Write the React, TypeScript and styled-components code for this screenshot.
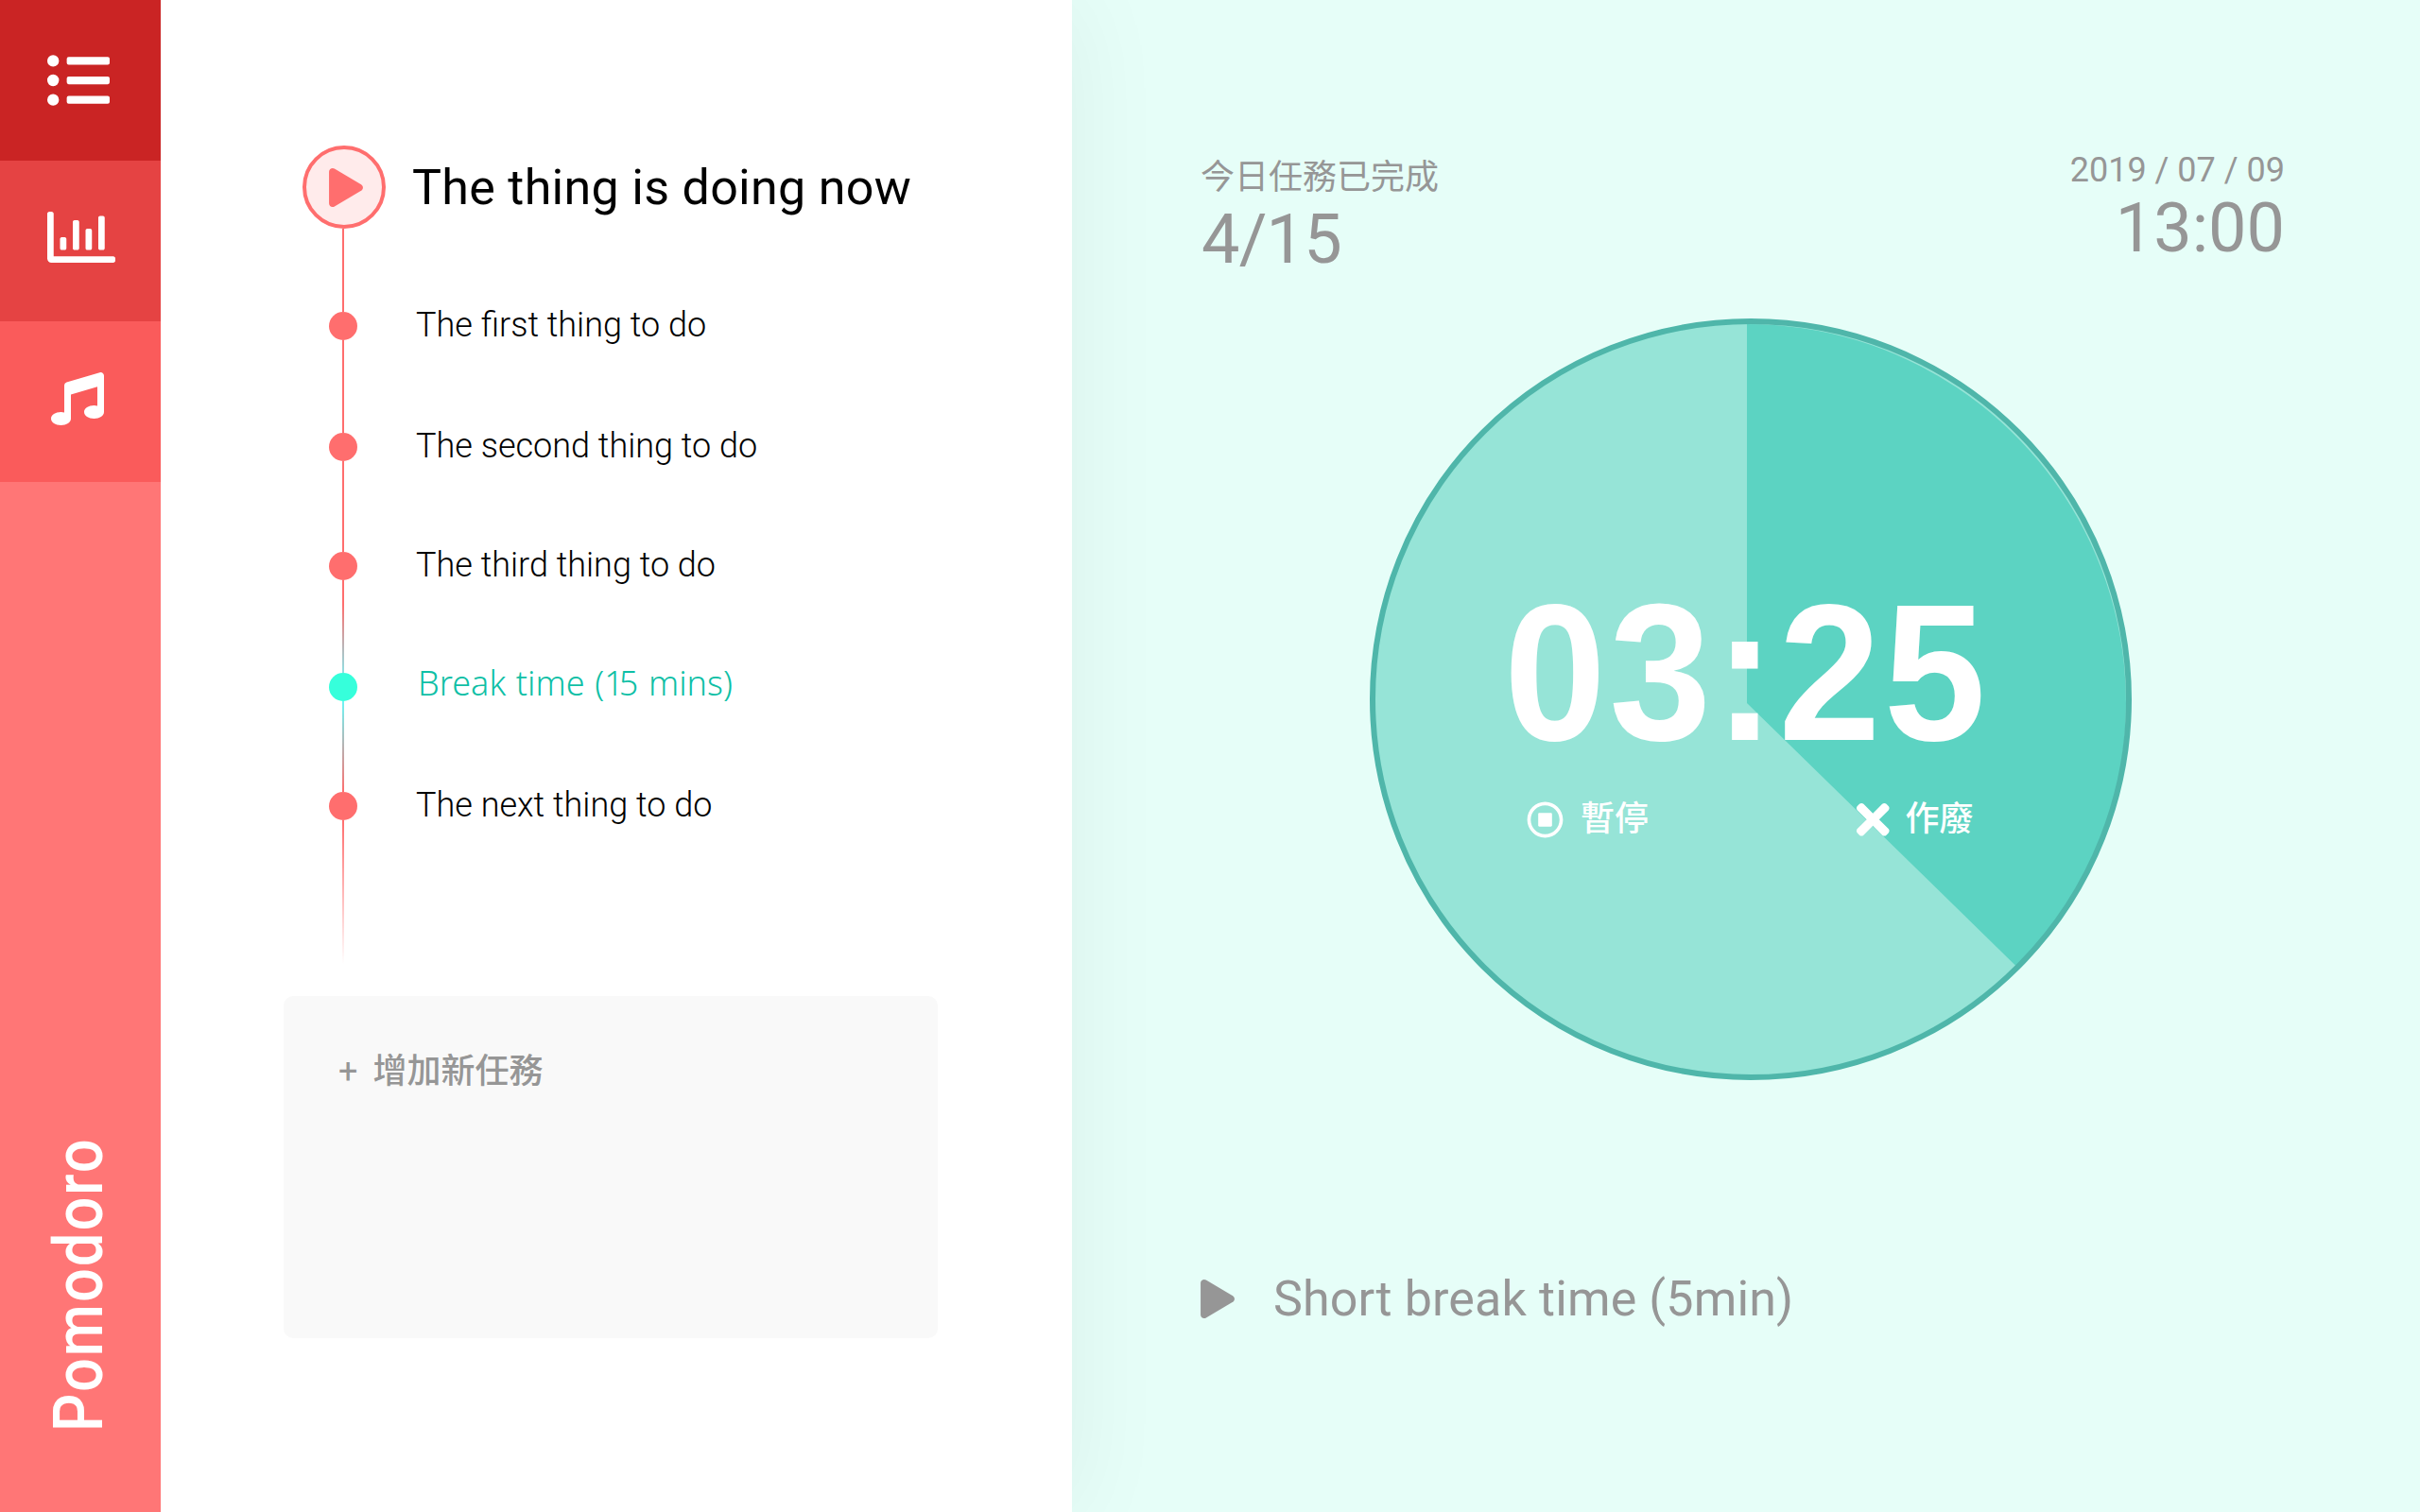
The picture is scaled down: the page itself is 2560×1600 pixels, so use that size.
import React, { type ReactNode } from "react";
import styled, { createGlobalStyle } from "styled-components";
import { FaListUl, FaRegChartBar, FaMusic, FaPlay, FaRegStopCircle, FaTimes } from "react-icons/fa";

const GlobalStyle = createGlobalStyle`
  *, *::before, *::after { box-sizing: border-box; }
  body { margin: 0; background: #e6fef8; }
  svg { display: block; flex: none; }
`;

const Page = styled.div`
  display: flex;
  width: 2560px;
  height: 1600px;
  overflow: hidden;
  font-family: Roboto, "Noto Sans CJK TC", sans-serif;
  color: #000;
`;

/* ---------- sidebar ---------- */

const Sidebar = styled.nav`
  display: flex;
  flex-direction: column;
  flex: none;
  width: 170px;
  background: #ff7676;
  color: #fff;
  position: relative;
  z-index: 2;
`;

const NavItem = styled.a<{ $bg: string; $top: number; $left: number }>`
  display: block;
  flex: none;
  height: 170px;
  padding: ${(p) => p.$top}px 0 0 ${(p) => p.$left}px;
  background: ${(p) => p.$bg};
`;

const Brand = styled.div`
  margin-top: auto;
  margin-bottom: 64px;
  width: 167px;
  font-size: 72px;
  font-weight: 500;
  line-height: 167px;
  letter-spacing: 2.2px;
  white-space: nowrap;
  writing-mode: vertical-rl;
  transform: rotate(180deg) scaleY(0.88);
`;

/* ---------- task panel ---------- */

const TaskPanel = styled.section`
  position: relative;
  z-index: 1;
  flex: none;
  width: 964px;
  padding: 154px 0 0 130px;
  background: #fff;
  box-shadow: 0 0 100px rgba(0, 0, 0, 0.06);
`;

const Timeline = styled.div`
  display: flex;
  flex-direction: column;
  padding-left: 20px;
`;

const CurrentTask = styled.div`
  display: flex;
  align-items: center;
  gap: 28px;
  height: 88px;
`;

const Headline = styled.span<{ $spacing: number }>`
  padding-top: 1px;
  font-size: 52px;
  line-height: 60px;
  letter-spacing: ${(p) => p.$spacing}px;
  white-space: nowrap;
`;

const PlayBadge = styled.span`
  display: flex;
  align-items: center;
  justify-content: center;
  width: 88px;
  height: 88px;
  padding-left: 4px;
  border: 4px solid #ff6e6e;
  border-radius: 50%;
  background: #ffebeb;
  color: #ff6e6e;
`;

const PlayIcon = styled(FaPlay)`
  width: 36px;
  height: 41px;
`;

const TaskRow = styled.div`
  display: flex;
  align-items: flex-end;
  gap: 34px;
`;

const Rail = styled.div`
  display: flex;
  flex: none;
  flex-direction: column;
  align-items: center;
  width: 86px;
`;

const Connector = styled.span<{ $length: number; $from?: string; $to?: string }>`
  width: 2px;
  height: ${(p) => p.$length}px;
  background: linear-gradient(${(p) => p.$from ?? "#ff6e6e"}, ${(p) => p.$to ?? "#ff6e6e"});
`;

const Dot = styled.span<{ $rest?: boolean }>`
  width: 30px;
  height: 30px;
  border-radius: 50%;
  background: ${(p) => (p.$rest ? "#36ffdb" : "#ff6e6e")};
`;

const TaskLabel = styled.span`
  padding-bottom: 1px;
  font-size: 36px;
  font-weight: 300;
  line-height: 30px;
  white-space: nowrap;
`;

const BreakLabel = styled(TaskLabel)`
  padding: 0 0 4px 2px;
  font-family: "Noto Sans", sans-serif;
  word-spacing: 1.3px;
  color: #0fbfa6;
`;

const Kern = styled.span`
  letter-spacing: -5px;
`;

const NewTask = styled.div`
  display: flex;
  align-items: flex-start;
  gap: 16px;
  width: 692px;
  height: 362px;
  margin-top: 34px;
  padding: 54px 58px;
  border-radius: 10px;
  background: #f9f9f9;
  color: #969696;
  font-size: 36px;
  font-weight: 500;
  line-height: 52px;
`;

const Plus = styled.span`
  font-weight: 400;
`;

/* ---------- timer pane ---------- */

const TimerPane = styled.main`
  flex: 1;
  padding: 159px 143px 0 137px;
  background: #e6fef8;
  color: #969696;
`;

const Summary = styled.header`
  display: flex;
  justify-content: space-between;
  height: 178px;
`;

const Stat = styled.div<{ $gap: number; $right?: boolean }>`
  display: flex;
  flex-direction: column;
  align-items: ${(p) => (p.$right ? "flex-end" : "flex-start")};
  gap: ${(p) => p.$gap}px;
`;

const StatLabel = styled.span<{ $line: number }>`
  font-size: 36px;
  line-height: ${(p) => p.$line}px;
`;

const StatLabelCjk = styled(StatLabel)`
  margin-left: -1px;
  padding-top: 3px;
`;

const StatValue = styled.span<{ $spacing?: number }>`
  font-size: 72px;
  line-height: 72px;
  letter-spacing: ${(p) => p.$spacing ?? 0}px;
`;

const Clock = styled.div`
  display: grid;
  width: 806px;
  height: 806px;
  margin-left: 178px;
`;

const ClockFace = styled.svg`
  grid-area: 1 / 1;
  width: 806px;
  height: 806px;
`;

const ClockBody = styled.div`
  grid-area: 1 / 1;
  display: flex;
  flex-direction: column;
  padding-top: 277px;
  color: #fff;
`;

const Remaining = styled.div`
  margin-left: 142px;
  font-family: "Liberation Sans", Arial, sans-serif;
  font-size: 200px;
  font-weight: 700;
  line-height: 200px;
  letter-spacing: 3.5px;
  white-space: nowrap;
  transform: scale(0.97, 1.027);
  transform-origin: 0 169px;
`;

const Controls = styled.div`
  display: flex;
  gap: 212px;
  margin: 27px 0 0 166px;
`;

const Control = styled.div<{ $gap: number }>`
  display: flex;
  align-items: center;
  gap: ${(p) => p.$gap}px;
  font-size: 36px;
  font-weight: 500;
`;

const ControlLabel = styled.span`
  padding-bottom: 1px;
  line-height: 52px;
  white-space: nowrap;
`;

const NextUp = styled.div`
  display: flex;
  align-items: center;
  gap: 41px;
  height: 60px;
  margin: 201px 0 0 -1px;
`;

type Task = {
  id: string;
  label: ReactNode;
  length: number;
  rest?: boolean;
  from?: string;
  to?: string;
};

const tasks: Task[] = [
  { id: "first", label: "The first thing to do", length: 88 },
  { id: "second", label: "The second thing to do", length: 98 },
  { id: "third", label: "The third thing to do", length: 96 },
  {
    id: "break",
    label: (
      <>
        Break time (<Kern>1</Kern>5 mins)
      </>
    ),
    length: 98,
    rest: true,
    from: "#ff6e6e 26%",
    to: "#8fe0e4",
  },
  { id: "next", label: "The next thing to do", length: 96, from: "#6ef5f5", to: "#ff6e6e" },
];

const CENTER = { x: 399, y: 407 };
const RADIUS = 401;
const END_ANGLE = (44.35 * Math.PI) / 180;
const end = {
  x: CENTER.x + RADIUS * Math.cos(END_ANGLE),
  y: CENTER.y + RADIUS * Math.sin(END_ANGLE),
};

export default function App() {
  return (
    <Page>
      <GlobalStyle />
      <Sidebar>
        <NavItem $bg="#ca2424" $top={52} $left={50}>
          <FaListUl size={66} />
        </NavItem>
        <NavItem $bg="#e54343" $top={45} $left={50}>
          <FaRegChartBar size={72} />
        </NavItem>
        <NavItem $bg="#fa5b5b" $top={54} $left={54}>
          <FaMusic size={56} />
        </NavItem>
        <Brand>Pomodoro</Brand>
      </Sidebar>

      <TaskPanel>
        <Timeline>
          <CurrentTask>
            <PlayBadge>
              <PlayIcon />
            </PlayBadge>
            <Headline $spacing={0.3}>The thing is doing now</Headline>
          </CurrentTask>
          {tasks.map((t) => (
            <TaskRow key={t.id}>
              <Rail>
                <Connector $length={t.length} $from={t.from} $to={t.to} />
                <Dot $rest={t.rest} />
              </Rail>
              {t.rest ? <BreakLabel>{t.label}</BreakLabel> : <TaskLabel>{t.label}</TaskLabel>}
            </TaskRow>
          ))}
          <Rail>
            <Connector $length={152} $to="rgba(255, 110, 110, 0)" />
          </Rail>
        </Timeline>
        <NewTask>
          <Plus>+</Plus>
          <span>增加新任務</span>
        </NewTask>
      </TaskPanel>

      <TimerPane>
        <Summary>
          <Stat $gap={4}>
            <StatLabelCjk $line={52}>今日任務已完成</StatLabelCjk>
            <StatValue $spacing={-0.8}>4/15</StatValue>
          </Stat>
          <Stat $gap={5} $right>
            <StatLabel $line={42}>2019 / 07 / 09</StatLabel>
            <StatValue>13:00</StatValue>
          </Stat>
        </Summary>

        <Clock>
          <ClockFace viewBox="0 0 806 806">
            <circle cx="403" cy="403" r="400" fill="#96e4d7" />
            <path
              d={`M${CENTER.x} ${CENTER.y}V${CENTER.y - RADIUS}A${RADIUS} ${RADIUS} 0 0 1 ${end.x} ${end.y}Z`}
              fill="#5cd3c2"
            />
            <circle cx="403" cy="403" r="400" fill="none" stroke="#4fb6aa" strokeWidth="6" />
          </ClockFace>
          <ClockBody>
            <Remaining>03:25</Remaining>
            <Controls>
              <Control $gap={18}>
                <FaRegStopCircle size={39} />
                <ControlLabel>暫停</ControlLabel>
              </Control>
              <Control $gap={9}>
                <FaTimes size={50.5} />
                <ControlLabel>作廢</ControlLabel>
              </Control>
            </Controls>
          </ClockBody>
        </Clock>

        <NextUp>
          <PlayIcon />
          <Headline $spacing={0.13}>Short break time (5min)</Headline>
        </NextUp>
      </TimerPane>
    </Page>
  );
}
